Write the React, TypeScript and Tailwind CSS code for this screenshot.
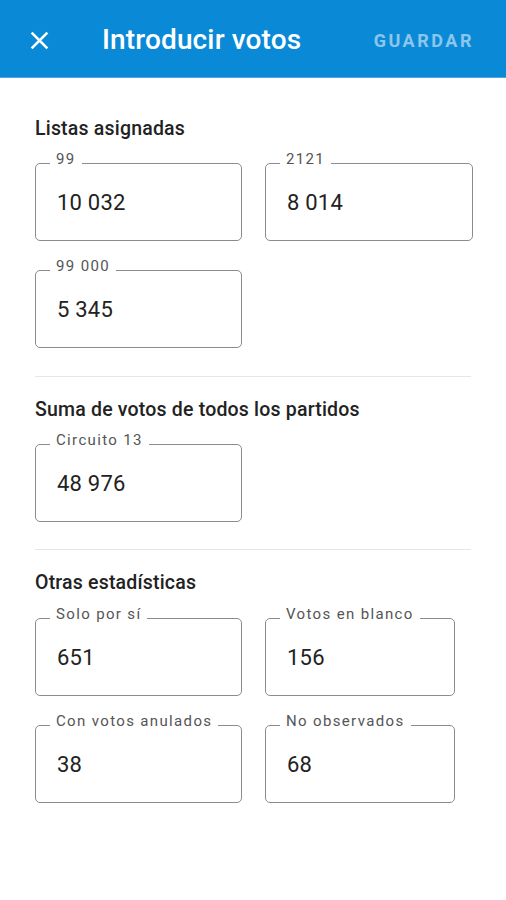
import React from "react";

function Field({ label, value, w = "w-[207px]" }: { label: string; value: string; w?: string }) {
  return (
    <div className={`relative ${w} h-[78px] rounded-[5px] border-[1.5px] border-[#8c8c8c] flex items-center`}>
      <span className="absolute left-[14px] top-[-15px] bg-white px-[6px] text-[15px] leading-[20px] text-[#555] tracking-[0.09em]">
        {label}
      </span>
      <span className="pl-[21px] pt-[1px] text-[22px] text-[#222] tracking-[0.01em]">{value}</span>
    </div>
  );
}

function Title({ children }: { children: React.ReactNode }) {
  return <div className="text-[19.5px] font-medium text-[#222] leading-[22px] tracking-[0.01em]">{children}</div>;
}

export default function App() {
  return (
    <div className="w-[506px] h-[900px] bg-white" style={{ fontFamily: "Roboto, 'Noto Sans', sans-serif" }}>
      <div className="h-[78px] bg-[#0a8ad6] border-b border-[#4ea8e6] flex items-center pt-[3px]">
        <div className="w-[78px] flex items-center justify-center">
          <svg width="21" height="21" viewBox="0 0 24 24" fill="none" stroke="white" strokeWidth="3" strokeLinecap="butt">
            <path d="M3 3L21 21M21 3L3 21" />
          </svg>
        </div>
        <div className="ml-[24px] text-[28px] font-medium text-white tracking-[0.005em]">Introducir votos</div>
        <div className="ml-auto mr-[32px] text-[18px] font-bold text-[#8cc6ec] tracking-[0.14em]">GUARDAR</div>
      </div>

      <div className="px-[35px] pt-[40px]">
        <Title>Listas asignadas</Title>
        <div className="mt-[23px] grid grid-cols-[207px_208px] gap-x-[23px] gap-y-[29px]">
          <Field label="99" value="10 032" />
          <Field label="2121" value="8 014" w="w-[208px]" />
          <Field label="99 000" value="5 345" />
        </div>
        <div className="mt-[28px] h-[1px] bg-[#e6e6e6]" />
        <div className="mt-[22px]">
          <Title>Suma de votos de todos los partidos</Title>
        </div>
        <div className="mt-[23px]">
          <Field label="Circuito 13" value="48 976" />
        </div>
        <div className="mt-[27px] h-[1px] bg-[#e6e6e6]" />
        <div className="mt-[22px]">
          <Title>Otras estadísticas</Title>
        </div>
        <div className="mt-[24px] grid grid-cols-[207px_190px] gap-x-[23px] gap-y-[29px]">
          <Field label="Solo por sí" value="651" />
          <Field label="Votos en blanco" value="156" w="w-[190px]" />
          <Field label="Con votos anulados" value="38" />
          <Field label="No observados" value="68" w="w-[190px]" />
        </div>
      </div>
    </div>
  );
}
